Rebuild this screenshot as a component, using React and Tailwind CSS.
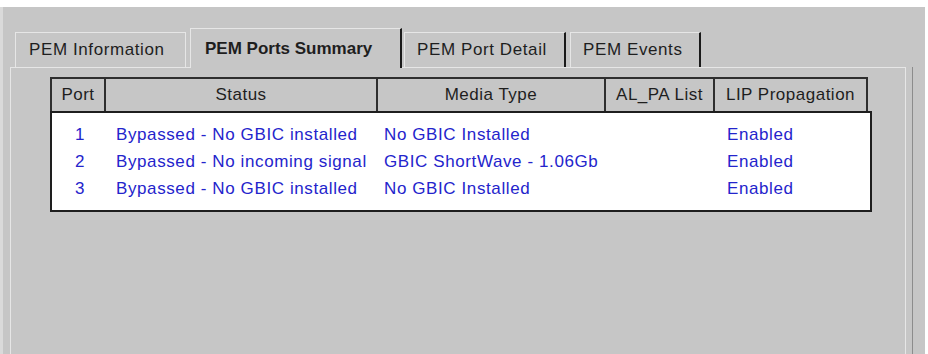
import React from "react";

const rows = [
  { port: "1", status: "Bypassed - No GBIC installed", media: "No GBIC Installed", alpa: "", lip: "Enabled" },
  { port: "2", status: "Bypassed - No incoming signal", media: "GBIC ShortWave - 1.06Gb", alpa: "", lip: "Enabled" },
  { port: "3", status: "Bypassed - No GBIC installed", media: "No GBIC Installed", alpa: "", lip: "Enabled" },
];

export default function App() {
  return (
    <div
      className="w-[928px] h-[354px] bg-white pt-[7px] pr-[3px] overflow-hidden"
      style={{ fontFamily: '"Liberation Sans", Arial, sans-serif' }}
    >
      <div className="h-full bg-[#c6c6c6] border-l-[3px] border-[#dadada] pl-[7px] pt-[20px] flex flex-col">
        {/* Tabs */}
        <div className="flex items-end h-[40px] ml-[5px] text-[17px] text-[#1e1e1e] tracking-[0.6px]">
          <div className="w-[171px] h-[35px] border-t border-l border-r border-[#e6e6e6] flex items-center pl-[13px]">
            PEM Information
          </div>
          <div className="relative z-10 ml-[4px] w-[212px] h-[40px] -mb-[1px] bg-[#c6c6c6] border-t border-l border-[#e6e6e6] border-r-2 border-r-[#1a1a1a] flex items-center pl-[14px] font-bold tracking-normal">
            PEM Ports Summary
          </div>
          <div className="ml-[2px] w-[162px] h-[35px] border-t border-l border-[#e6e6e6] border-r-2 border-r-[#1a1a1a] flex items-center pl-[12px]">
            PEM Port Detail
          </div>
          <div className="ml-[4px] w-[131px] h-[35px] border-t border-l border-[#e6e6e6] border-r-2 border-r-[#1a1a1a] flex items-center pl-[12px]">
            PEM Events
          </div>
        </div>

        {/* Panel */}
        <div className="flex-1 w-[903px] border-r border-[#8c8c8c] pr-[6px]">
          <div className="h-full border-t border-l border-r border-[#e6e6e6] pt-[9px] pl-[39px]">
            {/* Header */}
            <div className="flex w-[818px] h-[34px] border-t-2 border-l-2 border-[#2e2e2e] text-[17px] text-[#1e1e1e] tracking-[0.5px]">
              <div className="w-[54px] border-r-2 border-[#2e2e2e] flex items-center justify-center">Port</div>
              <div className="w-[272px] border-r-2 border-[#2e2e2e] flex items-center justify-center">Status</div>
              <div className="w-[228px] border-r-2 border-[#2e2e2e] flex items-center justify-center">Media Type</div>
              <div className="w-[109px] border-r-2 border-[#2e2e2e] flex items-center justify-center">AL_PA List</div>
              <div className="w-[153px] border-r-2 border-[#2e2e2e] flex items-center justify-center">LIP Propagation</div>
            </div>
            {/* Body */}
            <div className="w-[822px] h-[101px] bg-white border-2 border-[#1e1e1e] pt-[8px] text-[17px] text-[#2424cc] tracking-[0.6px]">
              {rows.map((r) => (
                <div key={r.port} className="flex h-[27px] items-center">
                  <div className="w-[56px] text-center">{r.port}</div>
                  <div className="w-[272px] pl-[8px] whitespace-nowrap">{r.status}</div>
                  <div className="w-[228px] pl-[4px] whitespace-nowrap">{r.media}</div>
                  <div className="w-[109px]">{r.alpa}</div>
                  <div className="w-[153px] pl-[10px]">{r.lip}</div>
                </div>
              ))}
            </div>
          </div>
        </div>
      </div>
    </div>
  );
}
